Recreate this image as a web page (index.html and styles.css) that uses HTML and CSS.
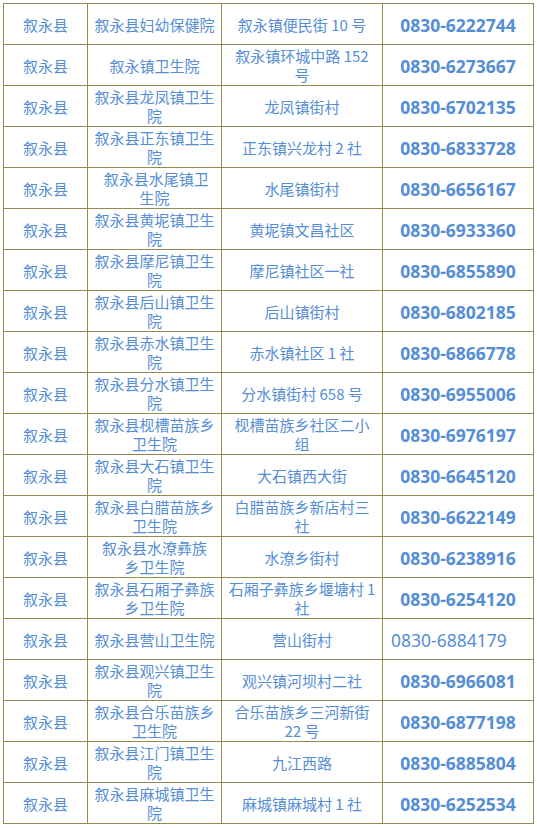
FILE: index.html
```html
<!DOCTYPE html>
<html lang="zh-CN">
<head>
<meta charset="utf-8">
<title>叙永县卫生院联系电话</title>
<link rel="stylesheet" href="styles.css">
</head>
<body>
<div class="wrap">
<table class="list">
  <colgroup>
    <col class="c1"><col class="c2"><col class="c3"><col class="c4">
  </colgroup>
  <tbody>
    <tr><td>叙永县</td><td>叙永县妇幼保健院</td><td>叙永镇便民街 10 号</td><td class="tel">0830-6222744</td></tr>
    <tr><td>叙永县</td><td>叙永镇卫生院</td><td>叙永镇环城中路 152<br>号</td><td class="tel">0830-6273667</td></tr>
    <tr><td>叙永县</td><td>叙永县龙凤镇卫生<br>院</td><td>龙凤镇街村</td><td class="tel">0830-6702135</td></tr>
    <tr><td>叙永县</td><td>叙永县正东镇卫生<br>院</td><td>正东镇兴龙村 2 社</td><td class="tel">0830-6833728</td></tr>
    <tr><td>叙永县</td><td>&nbsp;叙永县水尾镇卫<br>生院</td><td>水尾镇街村</td><td class="tel">0830-6656167</td></tr>
    <tr><td>叙永县</td><td>叙永县黄坭镇卫生<br>院</td><td>黄坭镇文昌社区</td><td class="tel">0830-6933360</td></tr>
    <tr><td>叙永县</td><td>叙永县摩尼镇卫生<br>院</td><td>摩尼镇社区一社</td><td class="tel">0830-6855890</td></tr>
    <tr><td>叙永县</td><td>叙永县后山镇卫生<br>院</td><td>后山镇街村</td><td class="tel">0830-6802185</td></tr>
    <tr><td>叙永县</td><td>叙永县赤水镇卫生<br>院</td><td>赤水镇社区 1 社</td><td class="tel">0830-6866778</td></tr>
    <tr><td>叙永县</td><td>叙永县分水镇卫生<br>院</td><td>分水镇街村 658 号</td><td class="tel">0830-6955006</td></tr>
    <tr><td>叙永县</td><td>叙永县枧槽苗族乡<br>卫生院</td><td>枧槽苗族乡社区二小<br>组</td><td class="tel">0830-6976197</td></tr>
    <tr><td>叙永县</td><td>叙永县大石镇卫生<br>院</td><td>大石镇西大街</td><td class="tel">0830-6645120</td></tr>
    <tr><td>叙永县</td><td>叙永县白腊苗族乡<br>卫生院</td><td>白腊苗族乡新店村三<br>社</td><td class="tel">0830-6622149</td></tr>
    <tr><td>叙永县</td><td>叙永县水潦彝族<br>乡卫生院</td><td>水潦乡街村</td><td class="tel">0830-6238916</td></tr>
    <tr><td>叙永县</td><td>叙永县石厢子彝族<br>乡卫生院</td><td>石厢子彝族乡堰塘村 1<br>社</td><td class="tel">0830-6254120</td></tr>
    <tr><td>叙永县</td><td>叙永县营山卫生院</td><td>营山街村</td><td class="tel plain">0830-6884179</td></tr>
    <tr><td>叙永县</td><td>叙永县观兴镇卫生<br>院</td><td>观兴镇河坝村二社</td><td class="tel">0830-6966081</td></tr>
    <tr><td>叙永县</td><td>叙永县合乐苗族乡<br>卫生院</td><td>合乐苗族乡三河新街<br>22 号</td><td class="tel">0830-6877198</td></tr>
    <tr><td>叙永县</td><td>叙永县江门镇卫生<br>院</td><td>九江西路</td><td class="tel">0830-6885804</td></tr>
    <tr><td>叙永县</td><td>叙永县麻城镇卫生<br>院</td><td>麻城镇麻城村 1 社</td><td class="tel">0830-6252534</td></tr>
  </tbody>
</table>
</div>
</body>
</html>
```

FILE: styles.css
```css
html, body {
  margin: 0;
  padding: 0;
  background: #ffffff;
}

.wrap {
  padding: 3px 0 0 3px;
}

.list {
  border-collapse: collapse;
  table-layout: fixed;
  width: 531px;
  font-family: "Noto Sans CJK SC", "Noto Sans", sans-serif;
  font-size: 15px;
  color: #558ed5;
}

.c1 { width: 84px; }
.c2 { width: 134px; }
.c3 { width: 161px; }
.c4 { width: 151px; }

.list tr {
  height: 41px;
}

.list td {
  border: 1px solid #948a54;
  padding: 0 2px;
  text-align: center;
  vertical-align: middle;
  line-height: 19px;
  white-space: nowrap;
  overflow: hidden;
}

.list td.tel {
  font-family: "Noto Sans", sans-serif;
  font-weight: bold;
  font-size: 17.5px;
  padding-top: 2px;
}

.list td.plain {
  font-weight: normal;
  text-align: left;
  padding-left: 8px;
}
```
